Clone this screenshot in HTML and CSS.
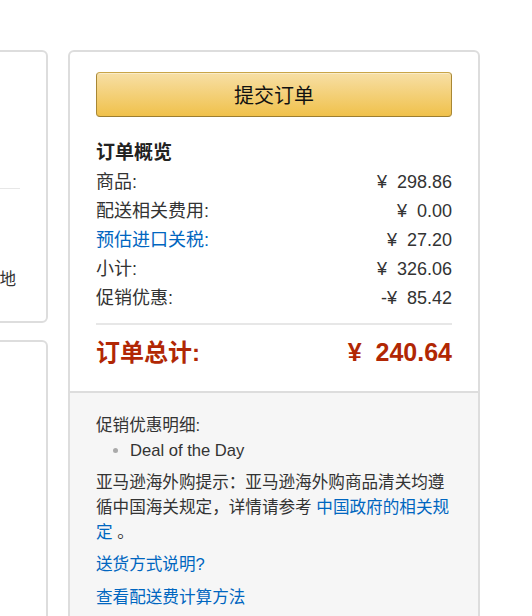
FILE: index.html
```html
<!DOCTYPE html>
<html lang="zh-CN">
<head>
    <meta charset="UTF-8">
    <meta name="viewport" content="width=device-width, initial-scale=1.0">
    <title>提交订单</title>
    <link rel="stylesheet" href="styles.css">
</head>
<body>
    <div class="page">
        <div class="left-col">
            <section class="card ship-card">
                <div class="ship-head">
                    <h3 class="ship-title">配送地址</h3>
                </div>
                <hr class="rule">
                <p class="ship-note">请耐心等待商品到达目的地</p>
            </section>
            <section class="card items-card"></section>
        </div>

        <aside class="card summary">
            <div class="summary-main">
                <button class="place-order">提交订单</button>
                <h3 class="summary-title">订单概览</h3>
                <ul class="summary-rows">
                    <li><span>商品:</span><span>¥&nbsp; 298.86</span></li>
                    <li><span>配送相关费用:</span><span>¥&nbsp; 0.00</span></li>
                    <li><a href="#">预估进口关税:</a><span>¥&nbsp; 27.20</span></li>
                    <li><span>小计:</span><span>¥&nbsp; 326.06</span></li>
                    <li><span>促销优惠:</span><span>-¥&nbsp; 85.42</span></li>
                </ul>
                <div class="summary-total">
                    <span>订单总计:</span>
                    <span class="total-amount">¥&nbsp; 240.64</span>
                </div>
            </div>

            <div class="summary-notes">
                <p>促销优惠明细:</p>
                <ul class="promo-list">
                    <li>Deal of the Day</li>
                </ul>
                <p class="notice">亚马逊海外购提示：亚马逊海外购商品清关均遵循中国海关规定，详情请参考 <a href="#">中国政府的相关规定</a> 。</p>
                <p class="note-link"><a href="#">送货方式说明?</a></p>
                <p class="note-link last"><a href="#">查看配送费计算方法</a></p>
            </div>
        </aside>
    </div>
</body>
</html>
```

FILE: styles.css
```css
* {
    box-sizing: border-box;
}
html, body {
    overflow: hidden;
}
body {
    margin: 0;
    background: #fff;
    color: #333;
    font-family: "Liberation Sans", "Noto Sans CJK SC", sans-serif;
}
a {
    color: #0066c0;
    text-decoration: none;
}
ul {
    list-style: none;
    margin: 0;
    padding: 0;
}
p {
    margin: 0;
}

.page {
    display: flex;
    justify-content: flex-end;
    gap: 20px;
    width: 480px;
    padding-top: 50px;
}
.card {
    background: #fff;
    border: 2px solid #ddd;
    border-radius: 6px;
}

/* 左侧 */
.left-col {
    flex: 0 0 300px;
}
.ship-card {
    height: 273px;
    padding: 0 26px;
}
.ship-head {
    height: 136px;
    padding-top: 20px;
}
.ship-title {
    margin: 0;
    font-size: 18px;
}
.rule {
    margin: 0;
    border: none;
    border-top: 1px solid #e7e7e7;
}
.ship-note {
    margin-top: 78px;
    padding-right: 4px;
    text-align: right;
    white-space: nowrap;
    font-size: 16.6px;
    line-height: 25px;
}
.items-card {
    margin-top: 17px;
    height: 400px;
}

/* 订单概览 */
.summary {
    flex: 0 0 412px;
    overflow: hidden;
}
.summary-main {
    padding: 20px 26px 21px;
}
.place-order {
    display: block;
    width: 100%;
    height: 45px;
    padding: 0;
    border: 1px solid #a88734;
    border-color: #c9a548 #a88734 #9c7e31;
    border-radius: 4px;
    background: linear-gradient(to bottom, #f7dfa5, #f0c14b);
    box-shadow: inset 0 1px 0 rgba(255, 255, 255, 0.4);
    color: #111;
    font-family: inherit;
    font-size: 20px;
    cursor: pointer;
}
.summary-title {
    margin: 22px 0 0;
    font-size: 19px;
    line-height: 28px;
    color: #222;
}
.summary-rows {
    margin-top: 1px;
}
.summary-rows li {
    display: flex;
    justify-content: space-between;
    font-size: 18px;
    line-height: 29px;
}
.summary-total {
    display: flex;
    justify-content: space-between;
    align-items: baseline;
    margin-top: 10px;
    padding-top: 10px;
    border-top: 2px solid #e7e7e7;
    color: #b12704;
    font-weight: bold;
    font-size: 24px;
    line-height: 34px;
}
.total-amount {
    font-size: 25px;
}

.summary-notes {
    min-height: 240px;
    padding: 20px 26px 20px 26px;
    border-top: 2px solid #ddd;
    background: #f6f6f6;
    font-size: 16.6px;
    line-height: 25px;
}
.promo-list {
    padding-left: 34px;
    list-style: disc;
}
.promo-list li::marker {
    color: #aaa;
}
.notice {
    margin-top: 7px;
}
.note-link {
    margin-top: 7px;
}
.note-link.last {
    margin-top: 8px;
}
```
